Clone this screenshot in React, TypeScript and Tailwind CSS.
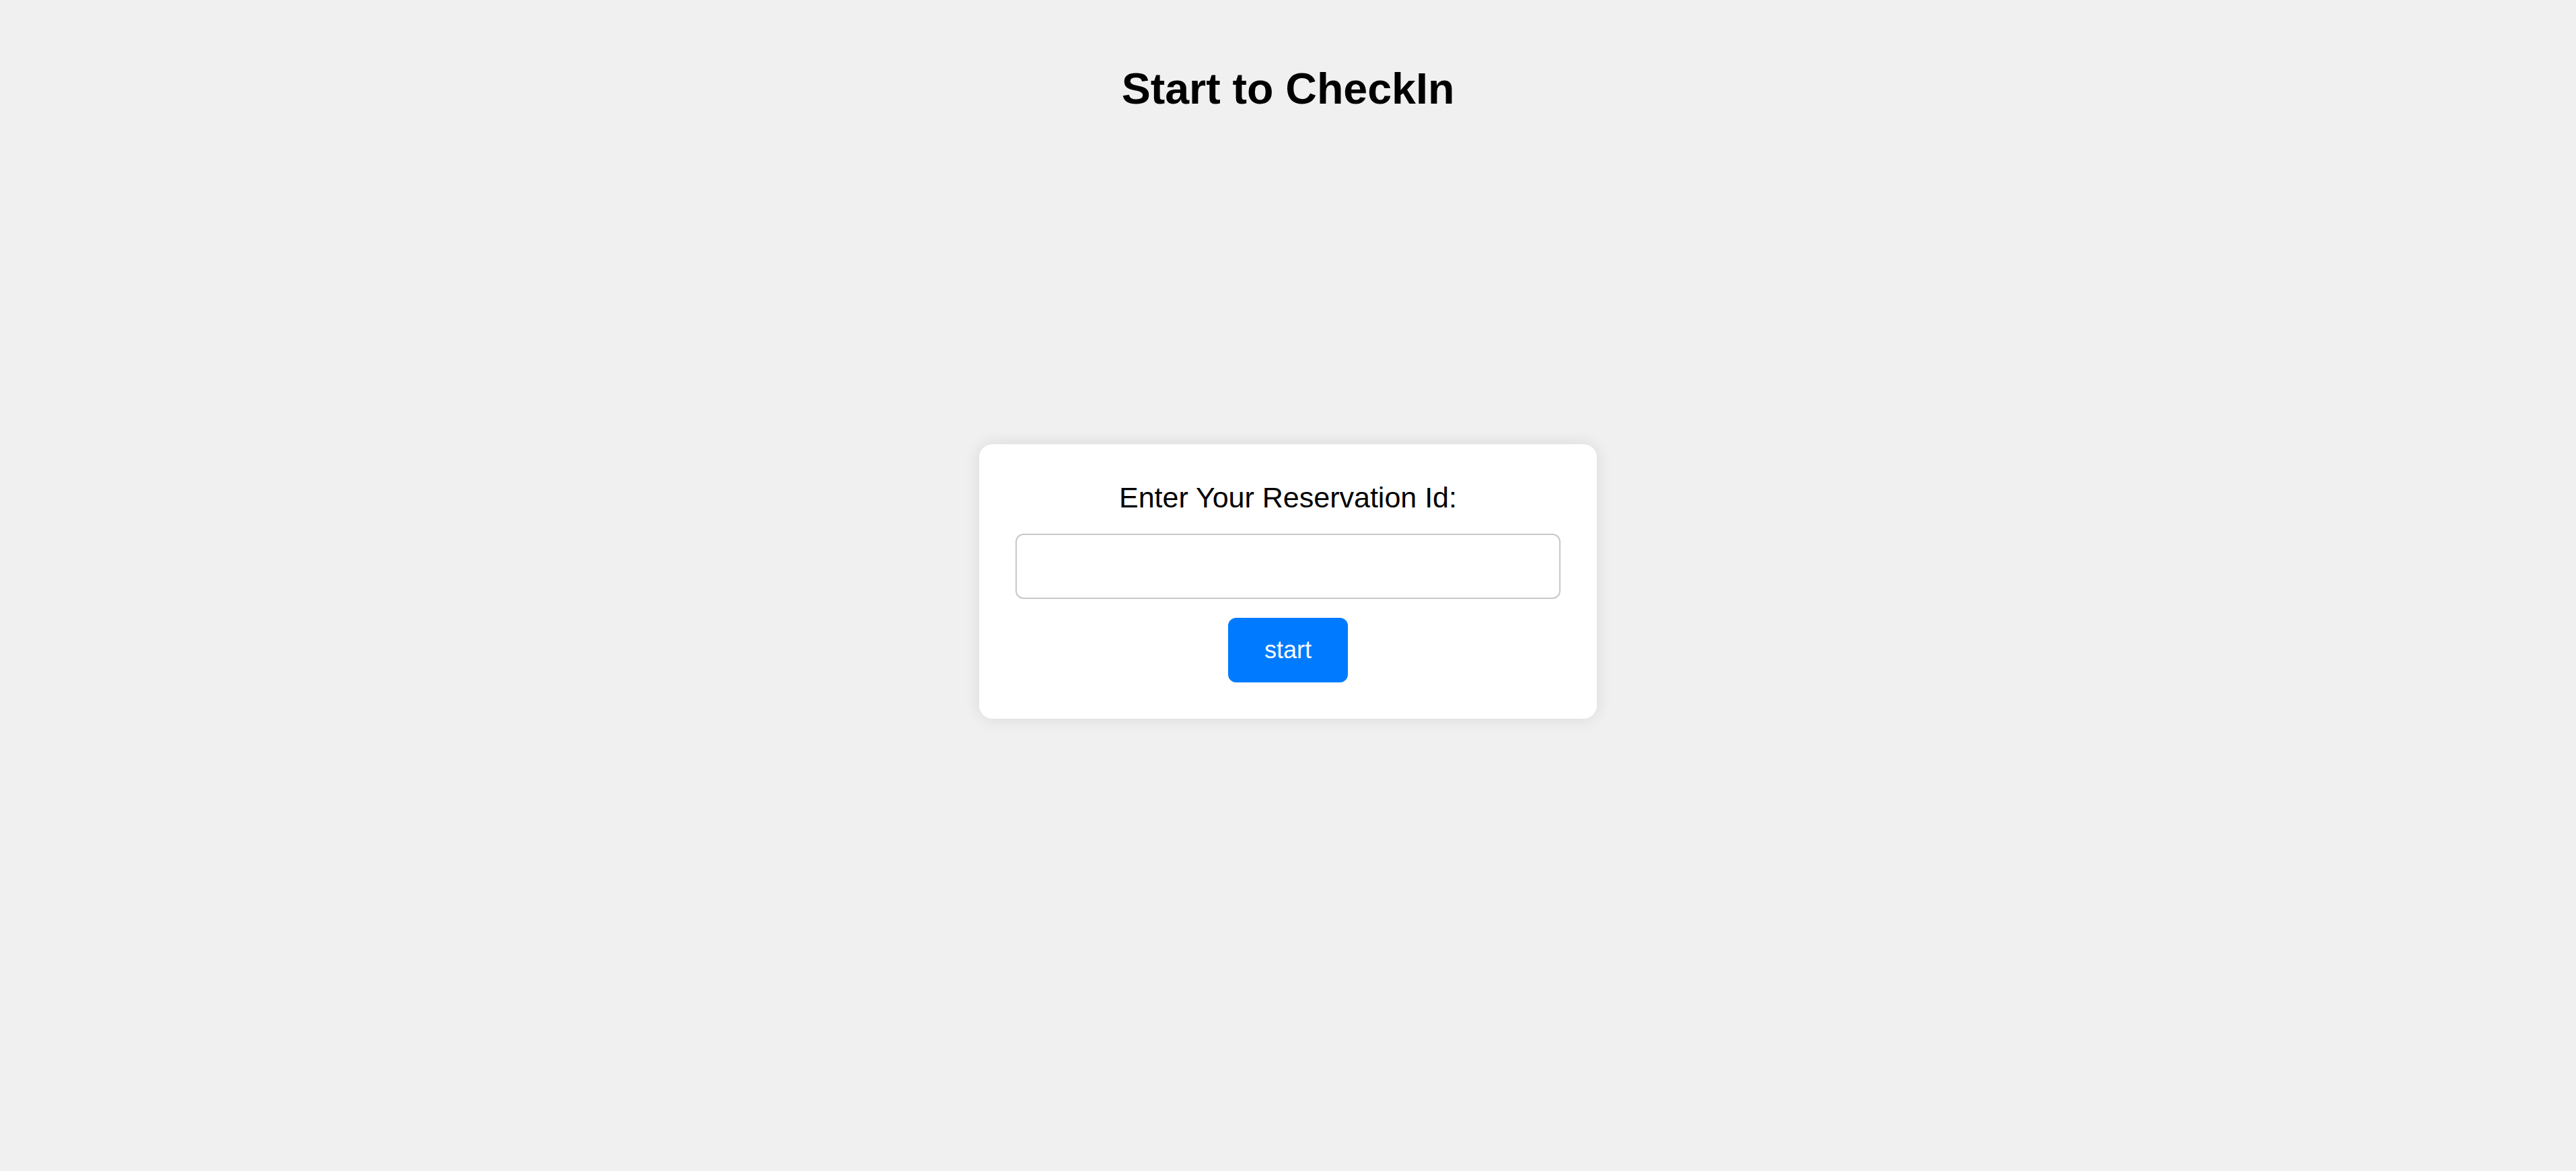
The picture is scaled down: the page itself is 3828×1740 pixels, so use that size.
export default function App() {
  return (
    <div className="min-h-[1740px] w-full bg-[#f0f0f0] flex flex-col items-center font-['Liberation_Sans',Arial,sans-serif] text-black">
      {/* Page title */}
      <h1 className="mt-[95px] text-[64.5px] leading-[1.15] font-bold">Start to CheckIn</h1>

      {/* Reservation card */}
      <div className="mt-[491px] w-[918px] bg-white rounded-[20px] shadow-[0_0_24px_rgba(0,0,0,0.1)] px-[54px] pt-[55px] pb-[54px] flex flex-col items-center">
        <label htmlFor="reservation" className="text-[43px] leading-[1.15]">
          Enter Your Reservation Id:
        </label>
        <input
          id="reservation"
          type="text"
          className="mt-[28px] w-full h-[97px] border-2 border-[#c8c8c8] rounded-[12px] bg-white px-[24px] text-[40px] outline-none"
        />
        <button
          type="button"
          className="mt-[28px] w-[178px] h-[96px] rounded-[12px] bg-[#007bff] text-white text-[36px] leading-[1.15]"
        >
          start
        </button>
      </div>
    </div>
  );
}
